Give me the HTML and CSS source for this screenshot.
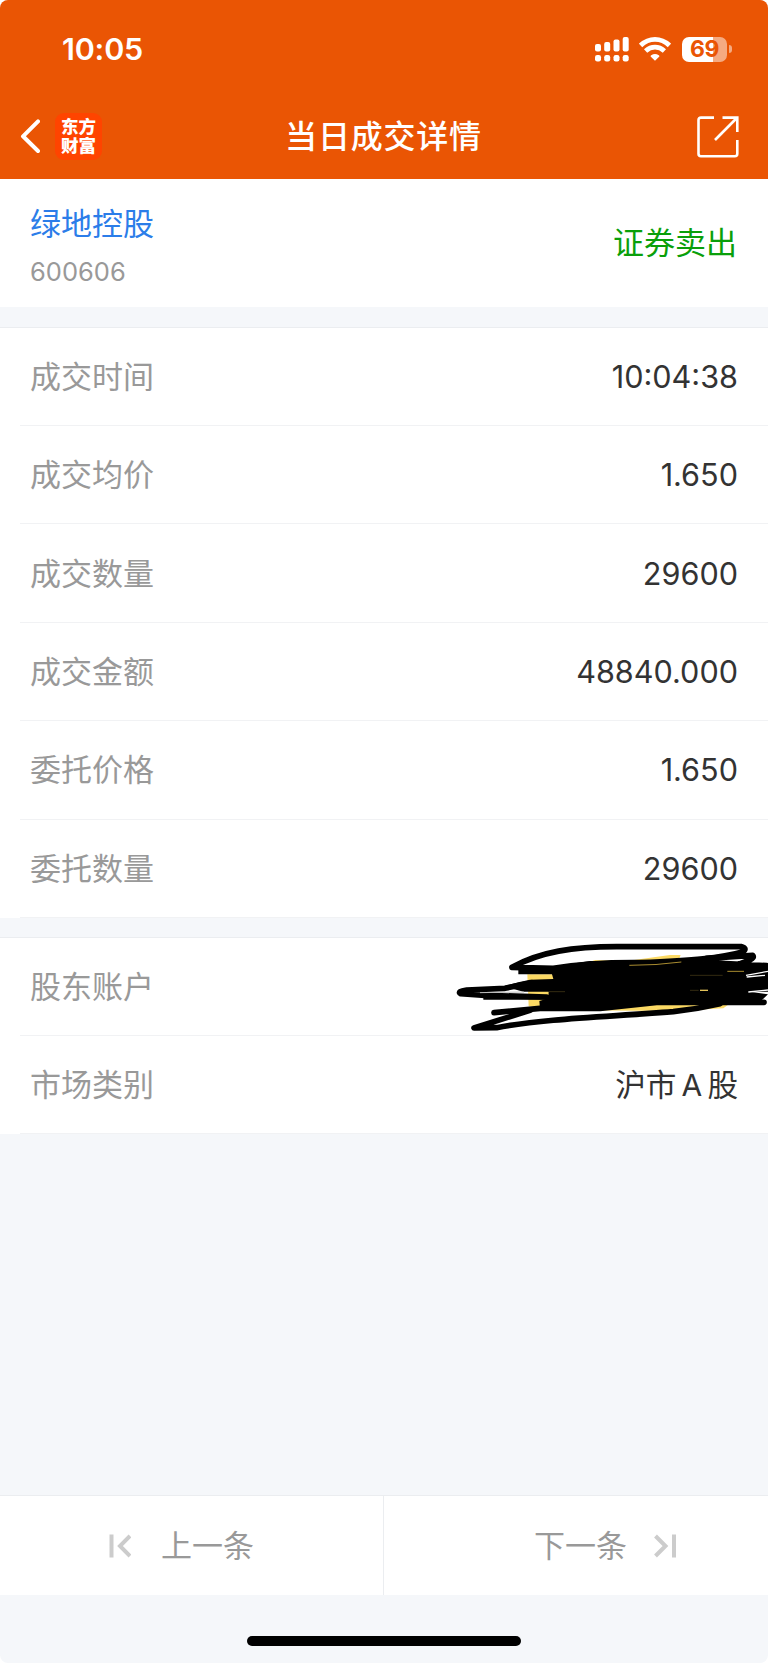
FILE: index.html
```html
<!DOCTYPE html>
<html lang="zh-CN">
<head>
    <meta charset="UTF-8">
    <meta name="viewport" content="width=device-width, initial-scale=1.0">
    <title>当日成交详情</title>
    <link rel="stylesheet" href="styles.css">
</head>
<body>

<div class="screen">
    <header class="header">
        <div class="status-bar">
            <span class="clock">10:05</span>
            <div class="status-icons">
                <svg class="signal" width="34" height="25" viewBox="0 0 34 25" fill="#fff">
                    <rect x="0" y="7" width="6" height="7.5" rx="2"/>
                    <rect x="9.2" y="5" width="6" height="9.5" rx="2"/>
                    <rect x="18.5" y="2.5" width="6" height="12" rx="2"/>
                    <rect x="27.7" y="0" width="6" height="14.5" rx="2"/>
                    <rect x="0" y="18" width="6" height="6.5" rx="2.2"/>
                    <rect x="9.2" y="18" width="6" height="6.5" rx="2.2"/>
                    <rect x="18.5" y="18" width="6" height="6.5" rx="2.2"/>
                    <rect x="27.7" y="18" width="6" height="6.5" rx="2.2"/>
                </svg>
                <svg class="wifi" width="32" height="24" viewBox="0 0 32 24">
                    <g fill="none" stroke="#fff" stroke-width="4.8">
                        <path d="M1.6 8.4 Q8 2.4 16 2.4 T30.4 8.4"/>
                        <path d="M6.6 14 Q10.8 10.2 16 10.2 T25.4 14"/>
                    </g>
                    <path d="M16 23.8 L11.6 19.4 Q11.5 18.7 12.2 18.2 Q16 15.6 19.8 18.2 Q20.5 18.7 20.4 19.4 Z" fill="#fff"/>
                </svg>
                <div class="battery"><span>69</span></div>
                <div class="battery-tip"></div>
            </div>
        </div>
        <div class="nav-bar">
            <div class="nav-left">
                <svg width="20" height="36" viewBox="0 0 20 36" fill="none" stroke="#fff" stroke-width="4" stroke-linecap="round" stroke-linejoin="round">
                    <path d="M18 3.3 L3 18.3 L18 33"/>
                </svg>
                <div class="logo">东方<br>财富</div>
            </div>
            <h1 class="title">当日成交详情</h1>
            <svg class="share" width="42" height="42" viewBox="0 0 42 42" fill="none" stroke="#fff" stroke-width="2.6">
                <path d="M17 1.6 H4 Q1.5 1.6 1.5 4 V37.8 Q1.5 40.3 4 40.3 H37.8 Q40.3 40.3 40.3 37.8 V24"/>
                <path d="M25.5 1.6 H40.3 V16"/>
                <path d="M39.8 2 L18 24"/>
            </svg>
        </div>
    </header>

    <section class="summary">
        <div>
            <div class="stock-name">绿地控股</div>
            <div class="stock-code">600606</div>
        </div>
        <div class="side">证券卖出</div>
    </section>

    <section class="list">
        <div class="row"><span class="label">成交时间</span><span class="value">10:04:38</span></div>
        <div class="row"><span class="label">成交均价</span><span class="value">1.650</span></div>
        <div class="row"><span class="label">成交数量</span><span class="value">29600</span></div>
        <div class="row"><span class="label">成交金额</span><span class="value">48840.000</span></div>
        <div class="row"><span class="label">委托价格</span><span class="value">1.650</span></div>
        <div class="row"><span class="label">委托数量</span><span class="value">29600</span></div>
    </section>

    <section class="list account">
        <div class="row">
            <span class="label">股东账户</span>
            <!-- hand-drawn redaction over the account number -->
            <svg class="scribble" width="328" height="120" viewBox="0 0 984 360">
                <path fill="#fbd964" d="M262 160 H350 L465 117 L560 120 L690 102 L722 102 L718 112 L800 125 L912 150 L900 225 L850 262 L700 270 L400 268 L266 256 Z"/>
                <path d="M340 174 L330 138 L450 120 L600 124 L780 118 L820 126 H984 V212 L930 212 L984 220 L950 252 H760 L580 252 L480 260 L300 264 L298 240 L325 232 L326 212 H250 L190 196 L235 184 L270 176 Z"/>
                <g fill="none" stroke="#000" stroke-width="17" stroke-linecap="round" stroke-linejoin="round">
                    <path d="M216 139 C300 92 400 77 530 77 H905 Q922 82 910 92 C840 112 760 118 600 125 C480 124 400 132 340 142 L216 139"/>
                    <path d="M800 112 L938 103 Q944 110 930 117 L895 130 M800 125 L980 134"/>
                    <path d="M275 185 L195 202 L80 207 Q50 212 62 218 L135 223 L320 228 M162 275 L300 262 L480 262 L650 244 H972"/>
                    <path d="M270 268 L102 321 L170 320 C320 292 500 288 700 272 Q770 264 840 248"/>
                </g>
                <g fill="none" stroke="#000" stroke-width="14">
                    <path d="M235 153 H350 M130 229 H320"/>
                </g>
                <g fill="none" stroke="#fff" stroke-width="4">
                    <path d="M918 163 L984 151 M920 168 L975 163 M925 213 L984 207"/>
                    <path d="M120 215 L252 213" stroke="#bbb" stroke-width="3"/>
                </g>
                <g fill="none" stroke="#a98c30" stroke-width="3">
                    <path d="M568 133 Q650 133 724 123 M862 151 H912"/>
                    <path d="M780 208 H804" stroke="#e2c25a" stroke-width="4"/>
                    <path d="M750 163 H848 M750 208 H776 M327 212 H375" stroke="#4d4119" stroke-width="2"/>
                </g>
            </svg>
        </div>
        <div class="row"><span class="label">市场类别</span><span class="value market">沪市<span class="latin">A</span>股</span></div>
    </section>

    <footer class="pager">
        <div class="pager-btn prev">
            <svg width="22" height="24" viewBox="0 0 22 24" fill="none" stroke="#ccc" stroke-width="4">
                <path d="M2.5 0.5 V23.5 M21 2 L11 12 L21 22"/>
            </svg>
            <span>上一条</span>
        </div>
        <div class="pager-btn next">
            <span>下一条</span>
            <svg width="22" height="24" viewBox="0 0 22 24" fill="none" stroke="#ccc" stroke-width="4">
                <path d="M20 0.5 V23.5 M1.5 2 L11.5 12 L1.5 22"/>
            </svg>
        </div>
    </footer>
    <div class="home-area"><div class="home-indicator"></div></div>
</div>

</body>
</html>
```

FILE: styles.css
```css
* {
    box-sizing: border-box;
}

body {
    margin: 0;
    background: #fff;
    font-family: Inter, "Noto Sans CJK SC", sans-serif;
    color: #333;
}

.screen {
    width: 768px;
    height: 1663px;
    display: flex;
    flex-direction: column;
    background: #f5f7fa;
    border-radius: 8px;
    overflow: hidden;
}

/* header */
.header {
    height: 179px;
    flex: none;
    background: #ea5504;
    color: #fff;
}

.status-bar {
    height: 98px;
    padding: 0 36px 0 62px;
    display: flex;
    justify-content: space-between;
    align-items: center;
}

.clock {
    font-size: 30.5px;
    font-weight: 600;
    letter-spacing: -0.2px;
    line-height: 36px;
}

.status-icons {
    display: flex;
    align-items: center;
}

.wifi {
    margin: 0 11px 0 10px;
}

.battery {
    width: 45px;
    height: 25px;
    border-radius: 7px;
    background: linear-gradient(to right, #fff 31px, #f5aa81 31px);
    color: #ea5504;
    font-size: 23px;
    font-weight: 700;
    letter-spacing: -0.5px;
    line-height: 25px;
    text-align: center;
}

.battery-tip {
    width: 3px;
    height: 8px;
    margin-left: 2px;
    border-radius: 0 4px 4px 0;
    background: #f5aa81;
}

.nav-bar {
    height: 76px;
    padding: 0 29px 0 20px;
    display: grid;
    grid-template-columns: 1fr auto 1fr;
    align-items: center;
}

.nav-left {
    display: flex;
    align-items: center;
    gap: 15px;
}

.logo {
    width: 47px;
    height: 47px;
    padding-top: 3px;
    border-radius: 9px;
    background: #ff4400;
    font-family: "Noto Sans CJK SC", sans-serif;
    font-size: 17.5px;
    font-weight: 900;
    line-height: 19.5px;
    text-align: center;
}

.title {
    margin: 2px 0 0 8px;
    font-size: 32px;
    font-weight: 500;
    letter-spacing: 0.8px;
    line-height: 48px;
}

.share {
    justify-self: end;
    margin-top: 2px;
}

/* stock summary */
.summary {
    height: 128px;
    flex: none;
    padding: 0 31px 0 30px;
    display: flex;
    justify-content: space-between;
    align-items: center;
    background: #fff;
    font-size: 31px;
}

.stock-name {
    margin-top: 5px;
    color: #2b7de9;
    line-height: 46px;
}

.stock-code {
    margin-top: 7px;
    color: #999;
    font-size: 25.5px;
    line-height: 36px;
}

.side {
    padding-bottom: 5px;
    color: #0a9f0a;
}

/* detail rows */
.list {
    flex: none;
    margin-top: 19.6px;
    border-top: 1px solid #ebedf0;
    background: #fff;
}

.account {
    margin-top: 18.6px;
}

.row {
    position: relative;
    height: 98.4px;
    margin-left: 20px;
    padding: 0 30px 0 10px;
    display: flex;
    justify-content: space-between;
    align-items: center;
    border-bottom: 1px solid #f1f2f4;
    font-size: 31px;
}

.label {
    padding-bottom: 4px;
    color: #999;
}

.value {
    font-size: 30.6px;
}

.market {
    padding-bottom: 4px;
    display: flex;
    align-items: baseline;
}

.latin {
    width: 31px;
    font-size: 30px;
    text-align: center;
}

.scribble {
    position: absolute;
    top: -17px;
    right: 0;
}

/* bottom pager */
.pager {
    height: 100px;
    flex: none;
    margin-top: auto;
    display: flex;
    border-top: 1px solid #ebedf0;
    background: #fff;
    color: #999;
    font-size: 31px;
}

.pager-btn {
    width: 50%;
    display: flex;
    align-items: center;
    gap: 30px;
}

.pager-btn span {
    padding-bottom: 4px;
}

.prev {
    padding-left: 109px;
    border-right: 1px solid #ebedf0;
}

.next {
    justify-content: flex-end;
    gap: 27px;
    padding-right: 92px;
}

.home-area {
    height: 68px;
    flex: none;
    padding-top: 41px;
}

.home-indicator {
    width: 274px;
    height: 10px;
    margin: 0 auto;
    border-radius: 5px;
    background: #000;
}
```
